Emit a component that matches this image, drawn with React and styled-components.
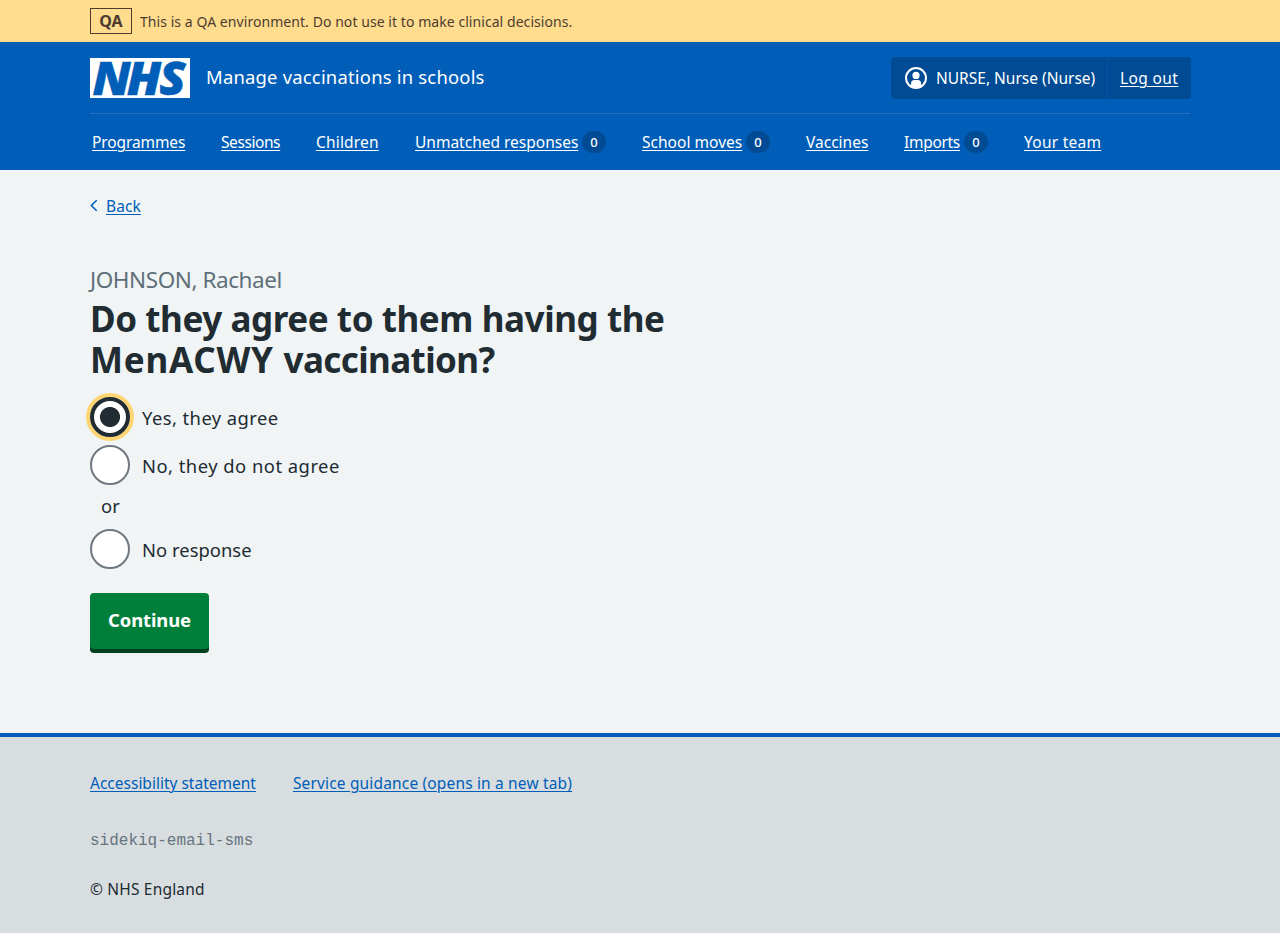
import React from "react";
import styled, { createGlobalStyle } from "styled-components";

const GlobalStyle = createGlobalStyle`
  *, *::before, *::after { box-sizing: border-box; }
  html { background: #d8dde0; }
  body {
    margin: 0;
    color: #212b32;
    font-family: "Noto Sans", "Open Sans", sans-serif;
    font-size: 16px;
    line-height: 24px;
  }
`;

const Page = styled.div`
  display: flex;
  flex-direction: column;
  min-height: 933px;
  background: #f0f4f5;
`;

const Container = styled.div`
  width: 1100px;
  margin: 0 auto;
`;

const Text = styled.span`
  letter-spacing: ${(p) => p.$track || 0}px;
  white-space: nowrap;
`;

const Banner = styled.div`
  height: 42px;
  padding-top: 8px;
  background: #ffdc8e;
  color: #4d3c2f;
`;

const BannerRow = styled(Container)`
  display: flex;
  gap: 8px;
  font-size: 14px;
  line-height: 27px;
`;

const EnvTag = styled.strong`
  width: 42px;
  height: 26px;
  border: 1px solid currentColor;
  font-size: 16px;
  font-weight: 700;
  line-height: 25px;
  text-align: center;
`;

const Header = styled.header`
  height: 128px;
  background: #005eb8;
  color: #fff;
`;

const HeaderTop = styled(Container)`
  display: flex;
  align-items: center;
  height: 72px;
  border-bottom: 1px solid #266fc0;
`;

const Logo = styled.svg`
  display: block;
  flex: none;
  width: 100px;
  height: 40px;
  margin-right: 16px;
  overflow: visible;
`;

const ServiceName = styled.span`
  padding-bottom: 2px;
  font-size: 18.4px;
`;

const Account = styled.div`
  display: flex;
  flex: none;
  width: 300px;
  height: 42px;
  margin: 0 -1px 0 auto;
  border-radius: 4px;
  background: #004b93;
`;

const AccountItem = styled.div`
  display: flex;
  align-items: center;
  flex: none;
  height: 40px;
  margin-top: 1px;
  padding-left: ${(p) => p.$inset}px;
  width: ${(p) => p.$width}px;
  gap: 9px;
  border-left: ${(p) => (p.$divided ? "1px solid #0056a8" : "0")};
  font-size: 15.5px;
`;

const Link = styled.a`
  color: ${(p) => p.$color || "#fff"};
  letter-spacing: ${(p) => p.$track || 0}px;
  text-decoration: underline;
  text-decoration-thickness: 1px;
  text-underline-offset: 2px;
  white-space: nowrap;
`;

const Nav = styled.nav`
  width: 1100px;
  margin: 0 auto;
  padding: 16px 0 0 2px;
  display: flex;
  gap: 36px;
  font-size: 15.5px;
`;

const NavItem = styled.div`
  display: flex;
  align-items: center;
  height: 24px;
  width: ${(p) => p.$width}px;
`;

const Count = styled.span`
  width: 24px;
  height: 22px;
  margin-left: auto;
  border-radius: 11px;
  background: #004b93;
  font-size: 13px;
  font-weight: 500;
  line-height: 23px;
  text-align: center;
`;

const Main = styled.main`
  height: 563px;
`;

const BackLink = styled.div`
  display: flex;
  align-items: center;
  gap: 8px;
  padding-top: 24px;
  font-size: 15.5px;
`;

const Caption = styled.div`
  margin-top: 46px;
  color: #5f6f7a;
  font-size: 22.5px;
  line-height: 32px;
`;

const Title = styled.h1`
  margin: 2px 0 17px;
  font-size: 35px;
  font-weight: 700;
  line-height: 41px;
`;

const Choice = styled.label`
  display: flex;
  align-items: center;
  gap: 12px;
  height: 40px;
  margin-bottom: 8px;
  font-size: 18.4px;
`;

const ChoiceText = styled(Text)`
  padding-top: 2px;
`;

const Radio = styled.input`
  appearance: none;
  flex: none;
  width: 40px;
  height: 40px;
  margin: 0;
  border: 2px solid #6f7780;
  border-radius: 50%;
  background: #fff;

  &:checked {
    border: 4px solid #212b32;
    background: radial-gradient(circle, #212b32 9.6px, #fff 10.4px);
    box-shadow: 0 0 0 4px #ffd571;
  }
`;

const Divider = styled.div`
  width: 41px;
  height: 28px;
  margin: 0 0 8px;
  font-size: 18.4px;
  letter-spacing: 0.2px;
  line-height: 26px;
  text-align: center;
`;

const Button = styled.button`
  display: block;
  width: 119px;
  height: 56px;
  margin-top: 24px;
  padding: 0;
  border: 0;
  border-radius: 4px;
  background: #007f3b;
  box-shadow: 0 4px 0 #00401e;
  color: #fff;
  font: 700 18.4px/54px "Noto Sans", "Open Sans", sans-serif;
`;

const ButtonText = styled(Text)`
  display: block;
  height: 56px;
`;

const Footer = styled.footer`
  flex: 1;
  padding-top: 34px;
  border-top: 4px solid #005eb8;
  background: #d8dde0;
  font-size: 15.5px;
`;

const FooterLinks = styled.div`
  display: flex;
  gap: 37px;
`;

const Revision = styled.div`
  margin-top: 34px;
  color: #66747e;
  font-family: "Liberation Mono", monospace;
  font-size: 16px;
`;

const Copyright = styled.div`
  margin-top: 24px;
`;

const NAV = [
  { label: "Programmes", width: 93, track: -0.1 },
  { label: "Sessions", width: 59, track: -0.42 },
  { label: "Children", width: 63, track: 0.17 },
  { label: "Unmatched responses", width: 191, track: 0, count: 0 },
  { label: "School moves", width: 128, track: 0.03, count: 0 },
  { label: "Vaccines", width: 62, track: 0 },
  { label: "Imports", width: 84, track: -0.3, count: 0 },
  { label: "Your team", width: 77, track: 0.25 },
];

export default function App() {
  return (
    <Page>
      <GlobalStyle />
      <Banner>
        <BannerRow>
          <EnvTag>QA</EnvTag>
          <Text $track={0.06}>This is a QA environment. Do not use it to make clinical decisions.</Text>
        </BannerRow>
      </Banner>

      <Header>
        <HeaderTop>
          <Logo viewBox="0 0 100 40" role="img" aria-label="NHS">
            <rect width="100" height="40" fill="#fff" />
            <text
              y="36.6"
              x="2.4 35 66"
              transform="scale(1.05 1)"
              fill="#005eb8"
              stroke="#005eb8"
              strokeWidth="0.5"
              fontFamily="Open Sans"
              fontSize="46"
              fontStyle="italic"
              fontWeight="800"
            >
              NHS
            </text>
          </Logo>
          <ServiceName>
            <Text $track={0.22}>Manage vaccinations in schools</Text>
          </ServiceName>
          <Account>
            <AccountItem $inset={14} $width={216}>
              <svg width="22" height="22" viewBox="0 0 22 22" aria-hidden="true">
                <circle cx="11" cy="11" r="10" fill="none" stroke="#fff" strokeWidth="2" />
                <circle cx="11" cy="8.4" r="3.6" fill="#fff" />
                <path d="M6 20V16.8Q6 13 9.6 13H12.6Q16.2 13 16.2 16.8V20Q11 22.4 6 20Z" fill="#fff" />
              </svg>
              <Text>NURSE, Nurse (Nurse)</Text>
            </AccountItem>
            <AccountItem $inset={12} $width={84} $divided>
              <Link href="#" $track={0.38}>Log out</Link>
            </AccountItem>
          </Account>
        </HeaderTop>
        <Nav>
          {NAV.map((item) => (
            <NavItem key={item.label} $width={item.width}>
              <Link href="#" $track={item.track}>{item.label}</Link>
              {item.count !== undefined && <Count>{item.count}</Count>}
            </NavItem>
          ))}
        </Nav>
      </Header>

      <Main>
        <Container>
          <BackLink>
            <svg width="8" height="12" viewBox="0 0 8 12" aria-hidden="true">
              <path d="M6.7 0.3L1.4 5.5L6.7 10.7" fill="none" stroke="#005eb8" strokeWidth="1.6" />
            </svg>
            <Link href="#" $color="#005eb8" $track={0.1}>Back</Link>
          </BackLink>
          <Caption><Text $track={-0.44}>JOHNSON, Rachael</Text></Caption>
          <Title>
            <Text $track={-0.42}>Do they agree to them having the</Text>
            <br />
            <Text $track={0.75}>MenACWY </Text>
            <Text $track={-0.6}>vaccination?</Text>
          </Title>
          <Choice>
            <Radio type="radio" name="response" defaultChecked />
            <ChoiceText $track={0.43}>Yes, they agree</ChoiceText>
          </Choice>
          <Choice>
            <Radio type="radio" name="response" />
            <ChoiceText $track={0.48}>No, they do not agree</ChoiceText>
          </Choice>
          <Divider>or</Divider>
          <Choice>
            <Radio type="radio" name="response" />
            <ChoiceText $track={0.03}>No response</ChoiceText>
          </Choice>
          <Button type="button"><ButtonText $track={-0.1}>Continue</ButtonText></Button>
        </Container>
      </Main>

      <Footer>
        <Container>
          <FooterLinks>
            <Link href="#" $color="#005eb8">Accessibility statement</Link>
            <Link href="#" $color="#005eb8" $track={0.16}>Service guidance (opens in a new tab)</Link>
          </FooterLinks>
          <Revision>sidekiq-email-sms</Revision>
          <Copyright><Text $track={0.19}>© NHS England</Text></Copyright>
        </Container>
      </Footer>
    </Page>
  );
}
